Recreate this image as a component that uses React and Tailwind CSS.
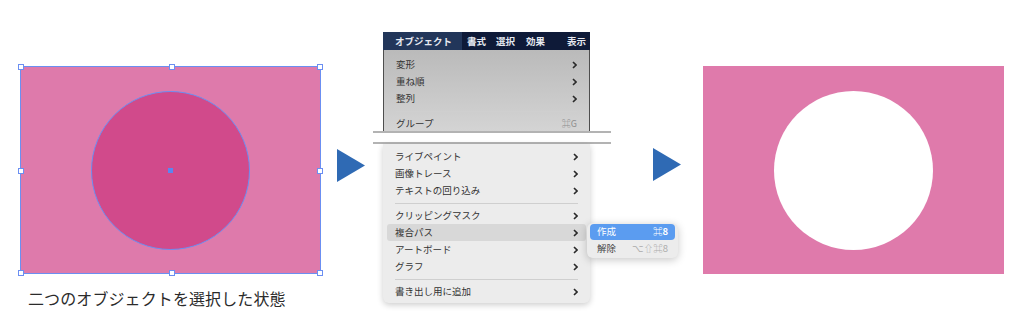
import React from 'react';

const jp = { fontFamily: '"Noto Sans CJK JP", "Noto Sans", sans-serif' };

const Chevron = () => (
  <svg width="5" height="8" viewBox="0 0 5 8" className="shrink-0">
    <path d="M1 1l3 3-3 3" fill="none" stroke="#2a2a2a" strokeWidth="1.6" />
  </svg>
);

const Arrow = () => (
  <svg width="28" height="33" viewBox="0 0 28 33">
    <path d="M0 0L28 16.5L0 33Z" fill="#2f6ab4" />
  </svg>
);

const Item = ({ label, right, active }) => (
  <div className={`mx-[4px] h-[17px] flex items-center justify-between pl-[8px] pr-[8px] rounded-[3px] ${active ? 'bg-[#d8d8d8]' : ''}`}>
    <span className="text-[9.5px] text-[#333] leading-none">{label}</span>
    {right || <Chevron />}
  </div>
);

const Sep = () => (
  <div className="h-[8px] flex items-center mx-[12px]">
    <div className="h-px w-full bg-[#cfcfcf]" />
  </div>
);

const handles = [
  'left-[-3px] top-[-3px]', 'left-[148px] top-[-3px]', 'right-[-3px] top-[-3px]',
  'left-[-3px] top-[101px]', 'right-[-3px] top-[101px]',
  'left-[-3px] bottom-[-3px]', 'left-[148px] bottom-[-3px]', 'right-[-3px] bottom-[-3px]',
];

export default function App() {
  return (
    <div className="w-[1024px] h-[332px] bg-white flex items-start overflow-hidden" style={jp}>
      {/* 選択状態 */}
      <div className="ml-[20px] mt-[66px] w-[301px]">
        <div className="relative h-[208px] bg-[#de7aab] border border-[#6b8ff2] flex items-center justify-center">
          <div className="w-[159px] h-[159px] rounded-full bg-[#d14a8b] border border-[#6b8ff2] flex items-center justify-center">
            <div className="w-[5px] h-[5px] bg-[#5b86f0]" />
          </div>
          {handles.map((h) => (
            <div key={h} className={`absolute ${h} w-[6px] h-[6px] bg-white border border-[#6b8ff2]`} />
          ))}
        </div>
        <p className="mt-[16px] ml-[8px] text-[16px] tracking-[0.1px] text-[#2b2b2b] leading-none whitespace-nowrap">二つのオブジェクトを選択した状態</p>
      </div>

      <div className="ml-[16px] mt-[149px]"><Arrow /></div>

      {/* メニュー */}
      <div className="relative ml-[18px] mt-[32px] w-[207px]">
        <div className="h-[18px] bg-[#0e1a38] flex items-center text-[9.5px] font-bold text-[#e6e9f0] overflow-hidden whitespace-nowrap">
          <div className="h-full bg-[#22365a] flex items-center pl-[12px] pr-[12px] w-[79px]">オブジェクト</div>
          <span className="ml-[5px]">書式</span>
          <span className="ml-[10px]">選択</span>
          <span className="ml-[11px]">効果</span>
          <span className="ml-[22px]">表示</span>
        </div>
        <div className="h-[81px] pt-[6px] bg-gradient-to-b from-[#bababa] to-[#d4d4d4] border-x border-[#4e4e4e]">
          <Item label="変形" />
          <Item label="重ね順" />
          <Item label="整列" />
          <Sep />
          <Item label="グループ" right={<span className="text-[9px] text-[#8e8e8e]">⌘G</span>} />
        </div>
        <div className="ml-[-10px] w-[238px] h-[2px] bg-[#b3b3b3]" />
        <div className="h-[9px] bg-white" />
        <div className="ml-[-10px] w-[238px] h-[2px] bg-[#b3b3b3]" />
        <div className="pt-[4px] pb-[3px] bg-[#ececec] rounded-b-[6px] shadow-[0_2px_6px_rgba(0,0,0,0.2)]">
          <Item label="ライブペイント" />
          <Item label="画像トレース" />
          <Item label="テキストの回り込み" />
          <Sep />
          <Item label="クリッピングマスク" />
          <Item label="複合パス" active />
          <Item label="アートボード" />
          <Item label="グラフ" />
          <Sep />
          <Item label="書き出し用に追加" />
        </div>

        {/* サブメニュー */}
        <div className="absolute left-[204px] top-[191px] w-[91px] py-[1px] px-[3px] bg-[#ececec] rounded-[6px] shadow-[0_2px_8px_rgba(0,0,0,0.22)]">
          <div className="h-[16px] bg-[#5b9cf0] rounded-[4px] flex items-center justify-between px-[7px] text-white text-[9.5px] leading-none">
            <span>作成</span>
            <span className="font-bold">⌘8</span>
          </div>
          <div className="h-[17px] flex items-center justify-between px-[7px] text-[9.5px] leading-none">
            <span className="text-[#444]">解除</span>
            <span className="text-[#ababab]">⌥⇧⌘8</span>
          </div>
        </div>
      </div>

      <div className="ml-[63px] mt-[148px]"><Arrow /></div>

      {/* 結果 */}
      <div className="ml-[22px] mt-[66px] w-[301px] h-[208px] bg-[#df7aab] flex items-center justify-center">
        <div className="w-[159px] h-[159px] rounded-full bg-white" />
      </div>
    </div>
  );
}
